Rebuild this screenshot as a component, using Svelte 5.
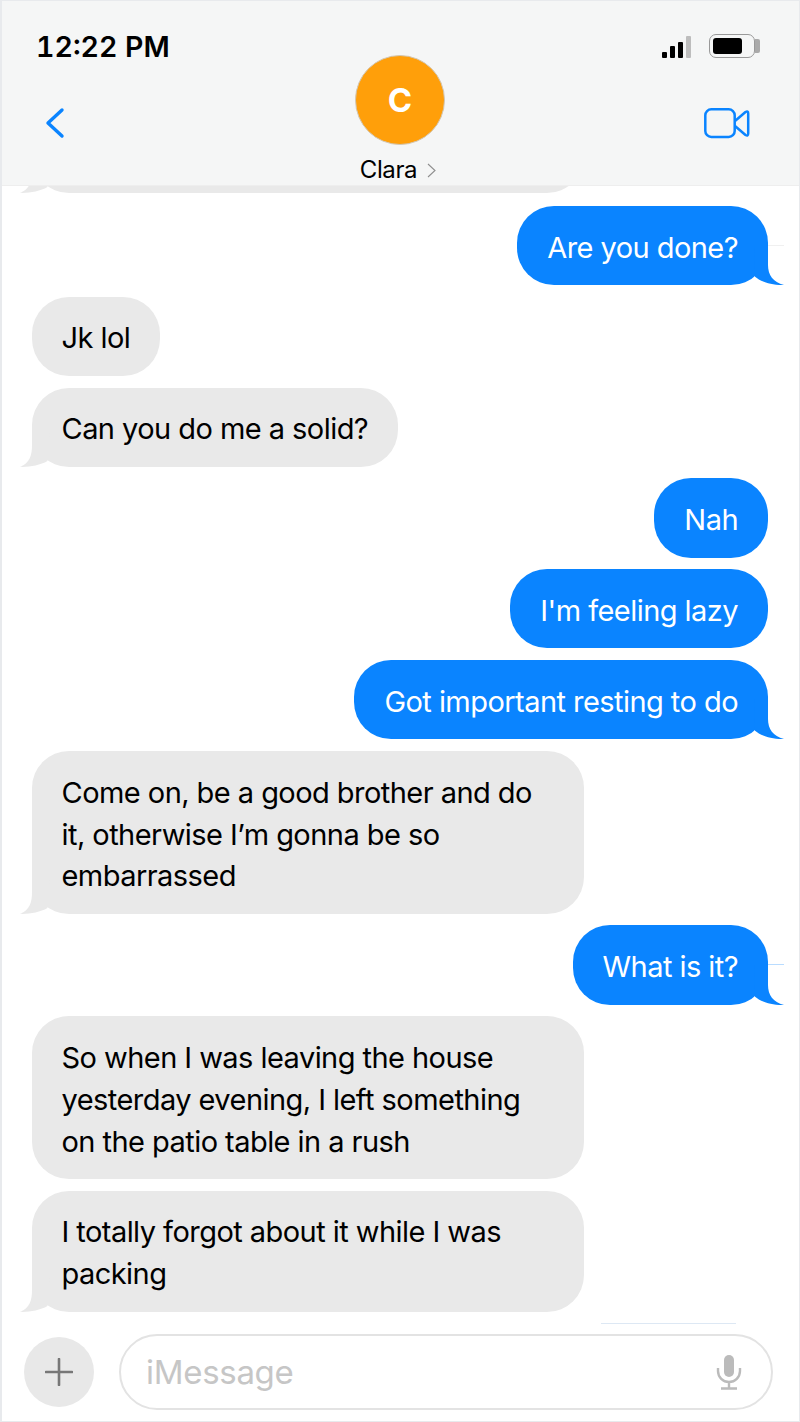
<script>
  const messages = [
    { from: 'them', text: '', tail: true, hidden: true },
    { from: 'me', text: 'Are you done?', tail: true, mark: 'faint' },
    { from: 'them', text: 'Jk lol' },
    { from: 'them', text: 'Can you do me a solid?', tail: true },
    { from: 'me', text: 'Nah' },
    { from: 'me', text: "I'm feeling lazy" },
    { from: 'me', text: 'Got important resting to do', tail: true },
    { from: 'them', text: 'Come on, be a good brother and do it, otherwise I’m gonna be so embarrassed', tail: true },
    { from: 'me', text: 'What is it?', tail: true, mark: 'blue' },
    { from: 'them', text: 'So when I was leaving the house yesterday evening, I left something on the patio table in a rush' },
    { from: 'them', text: 'I totally forgot about it while I was packing', tail: true }
  ];
</script>

<div class="phone">
  <header class="head">
    <div class="status">
      <span class="time">12:22 PM</span>
      <div class="indicators">
        <div class="signal">
          <i class="b1"></i><i class="b2"></i><i class="b3"></i><i class="b4"></i>
        </div>
        <div class="battery"><div class="cell"><div class="charge"></div></div><div class="nub"></div></div>
      </div>
    </div>
    <div class="nav">
      <svg class="back" width="20" height="32" viewBox="0 0 20 32" aria-hidden="true">
        <path d="M17 3 L3 16 L17 29" fill="none" stroke="#0a84ff" stroke-width="3.4" stroke-linecap="round" stroke-linejoin="round" />
      </svg>
      <div class="contact">
        <div class="avatar">C</div>
        <div class="name">Clara
          <svg width="9" height="15" viewBox="0 0 9 15" aria-hidden="true"><path d="M1 1 L8 7.5 L1 14" fill="none" stroke="#8e8e8e" stroke-width="1.1" /></svg>
        </div>
      </div>
      <svg class="video" width="46" height="31" viewBox="0 0 46 31" aria-hidden="true">
        <rect x="1.3" y="1.3" width="29.4" height="27.6" rx="6" fill="none" stroke="#0a84ff" stroke-width="2.5" />
        <path d="M31 13 L41.5 4 Q44.2 2.4 44.2 5.4 L44.2 25.6 Q44.2 28.6 41.5 27 L31 18" fill="none" stroke="#0a84ff" stroke-width="2.5" stroke-linejoin="round" />
      </svg>
    </div>
  </header>

  <main class="thread">
    {#each messages as m}
      <div class="row {m.from}" class:hidden={m.hidden}>
        <div class="bubble">
          {#if m.hidden}&nbsp;{:else}{m.text}{/if}
          {#if m.mark}<span class="mark {m.mark}"></span>{/if}
          {#if m.tail && m.from === 'me'}
            <svg class="tail" width="30" height="40" viewBox="0 0 30 40" aria-hidden="true">
              <path d="M1 31.7 C6 35.5 14 40.3 30 40 C19 37 14 30 14 20 L14 0 L0 0 Z" />
            </svg>
          {:else if m.tail}
            <svg class="tail" width="30" height="40" viewBox="0 0 30 40" aria-hidden="true">
              <path d="M12 0 L12 18 C12 28 10 36 0 39.8 C8 40.3 20 38.5 27.5 34 L30 0 Z" />
            </svg>
          {/if}
        </div>
      </div>
    {/each}
  </main>

  <footer class="composer">
    <span class="rule"></span>
    <div class="plus">
      <svg width="28" height="28" viewBox="0 0 28 28" aria-hidden="true">
        <path d="M14 1 V27 M1 14 H27" stroke="#777" stroke-width="2.6" stroke-linecap="round" />
      </svg>
    </div>
    <div class="input">
      <span class="placeholder">iMessage</span>
      <svg width="26" height="36" viewBox="0 0 26 36" aria-hidden="true">
        <rect x="8" y="1" width="10" height="22" rx="5" fill="#bbb" />
        <path d="M2 14 V17 A11 11 0 0 0 24 17 V14 M13 28 V34 M5 34.5 H21" fill="none" stroke="#bbb" stroke-width="2.4" />
      </svg>
    </div>
  </footer>
</div>

<style>
  :global(body) { margin: 0; background: #fff; }
  .phone {
    box-sizing: border-box;
    width: 800px;
    height: 1422px;
    display: flex;
    flex-direction: column;
    overflow: hidden;
    border: 1px solid #e8eaed;
    border-left-width: 2px;
    font-family: Inter, "Liberation Sans", sans-serif;
    background: #fff;
  }
  .head {
    position: relative;
    z-index: 2;
    flex: none;
    height: 185px;
    box-sizing: border-box;
    background: #f5f6f6;
    border-bottom: 1px solid #eeeeee;
    margin-right: -1px;
    padding: 0 40px 0 35px;
  }
  .status {
    height: 54px;
    display: flex;
    justify-content: space-between;
    align-items: flex-end;
  }
  .time {
    font-size: 28.5px;
    font-weight: 600;
    line-height: 34px;
    margin: 0 0 -9px -1px;
    color: #000;
    font-feature-settings: "tnum";
    font-variant-numeric: tabular-nums;
  }
  .indicators { display: flex; align-items: flex-end; gap: 18px; margin-bottom: -3px; }
  .signal { display: flex; align-items: flex-end; gap: 2.5px; height: 22px; }
  .signal i { display: block; width: 5.5px; background: #000; border-radius: 1px; }
  .b1 { height: 6px; }
  .b2 { height: 12px; }
  .b3 { height: 16px; }
  .signal .b4 { height: 22px; background: #bdbdbd; }
  .battery { display: flex; align-items: center; }
  .cell {
    box-sizing: border-box;
    width: 46px;
    height: 24px;
    padding: 2.5px;
    border: 1.5px solid #999;
    border-radius: 7px;
  }
  .charge { width: 29px; height: 16px; background: #000; border-radius: 3px; }
  .nub { width: 5px; height: 14px; background: #aaa; border-radius: 0 2px 2px 0; }
  .nav { position: relative; height: 130px; }
  .back { position: absolute; left: 8px; top: 52px; }
  .video { position: absolute; right: 10px; top: 53px; }
  .contact {
    position: absolute;
    left: 318px;
    top: 0;
    width: 90px;
    display: flex;
    flex-direction: column;
    align-items: center;
  }
  .avatar {
    box-sizing: border-box;
    width: 90px;
    height: 90px;
    border-radius: 50%;
    background: #ff9f0a;
    border: 1.5px solid #d2c7b5;
    color: #fff;
    font-size: 33px;
    font-weight: 700;
    line-height: 88px;
    text-align: center;
  }
  .name {
    margin-top: 9px;
    display: flex;
    align-items: center;
    gap: 10px;
    font-size: 24px;
    line-height: 32px;
    letter-spacing: -0.4px;
    color: #000;
    white-space: nowrap;
    margin-left: -4px;
  }
  .thread {
    flex: 1;
    min-height: 0;
    display: flex;
    flex-direction: column;
    gap: 11.7px;
    padding: 0 31px 0 30px;
    overflow: hidden;
  }
  .row { display: flex; }
  .row.me { justify-content: flex-end; }
  .row.hidden { margin-top: -72.2px; margin-bottom: 1.2px; }
  .row.hidden .bubble { width: 552px; }
  .bubble {
    position: relative;
    box-sizing: border-box;
    max-width: 552px;
    padding: 20.7px 30px 16.7px;
    border-radius: 37px;
    font-size: 29px;
    line-height: 41.8px;
    letter-spacing: -0.55px;
  }
  .them .bubble { background: #e9e9e9; color: #000; padding-left: 29.5px; }
  .me .bubble { background: #0a84ff; color: #fff; }
  .tail { position: absolute; bottom: 0; overflow: visible; }
  .them .tail { left: -12px; fill: #e9e9e9; }
  .me .tail { right: -16px; fill: #0a84ff; }
  .mark { position: absolute; top: 39px; right: -16px; width: 16px; height: 1px; }
  .mark.faint { background: #f0f0f0; }
  .mark.blue { background: #b9dcff; }
  .composer {
    position: relative;
    flex: none;
    height: 109px;
    box-sizing: border-box;
    display: flex;
    align-items: center;
    gap: 25px;
    padding: 0 26px 0 22px;
  }
  .rule {
    position: absolute;
    left: 599px;
    top: 11px;
    width: 135px;
    height: 1px;
    background: #dde8f4;
  }
  .plus {
    flex: none;
    width: 70px;
    height: 70px;
    margin-top: 11px;
    border-radius: 50%;
    background: #e8e8e8;
    display: flex;
    align-items: center;
    justify-content: center;
  }
  .input {
    flex: 1;
    height: 76px;
    margin-top: 11px;
    box-sizing: border-box;
    border: 2.5px solid #e3e3e3;
    border-radius: 38px;
    display: flex;
    align-items: center;
    justify-content: space-between;
    padding: 0 29px 0 25px;
  }
  .placeholder {
    font-size: 33px;
    letter-spacing: -0.3px;
    color: #c6c6c6;
  }
</style>
